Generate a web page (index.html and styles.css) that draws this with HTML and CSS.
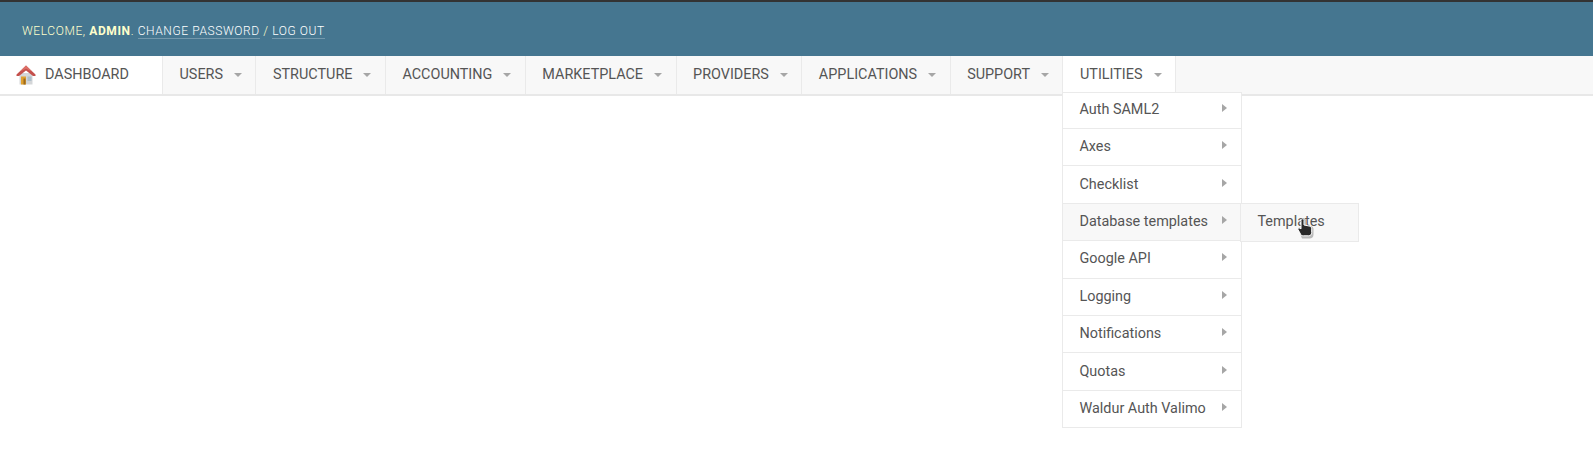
FILE: index.html
```html
<!DOCTYPE html>
<html lang="en">
<head>
<meta charset="utf-8">
<title>Utilities menu</title>
<link rel="stylesheet" href="styles.css">
</head>
<body>
<header class="top">
  <div class="tools">WELCOME, <strong>ADMIN</strong>. <a href="#">CHANGE PASSWORD</a> / <a href="#">LOG OUT</a></div>
</header>
<nav class="nav">
  <a class="dash" href="#">
    <svg class="home" width="20" height="20" viewBox="0 0 20 20">
      <path d="M3.500 8h13v11.500h-13z" fill="#d4d6d8"/>
      <path d="M5 11.500h5v8H5z" fill="#e0a02f"/>
      <path d="M7.500 13.500h2v6h-2z" fill="#9a6a20"/>
      <path d="M11.500 11.500h4v4.500h-4z" fill="#aebfca"/>
      <path d="M10 .5 19.500 9.500v1.500H17L10 5.500 3 11H.5V9.500z" fill="#c4504c"/>
      <path d="M10 .5 16 6.500 10 3.800 4 6.500z" fill="#dd7068"/>
    </svg>
    DASHBOARD
  </a>
  <div class="item"><span>USERS</span><i class="down"></i></div>
  <div class="item"><span>STRUCTURE</span><i class="down"></i></div>
  <div class="item"><span>ACCOUNTING</span><i class="down"></i></div>
  <div class="item"><span>MARKETPLACE</span><i class="down"></i></div>
  <div class="item"><span>PROVIDERS</span><i class="down"></i></div>
  <div class="item"><span>APPLICATIONS</span><i class="down"></i></div>
  <div class="item"><span>SUPPORT</span><i class="down"></i></div>
  <div class="item open"><span>UTILITIES</span><i class="down"></i>
    <ul class="menu">
      <li><span>Auth SAML2</span><i class="right"></i></li>
      <li><span>Axes</span><i class="right"></i></li>
      <li><span>Checklist</span><i class="right"></i></li>
      <li class="hover"><span>Database templates</span><i class="right"></i>
        <ul class="sub">
          <li><span>Templates</span>
            <svg class="cursor" width="17" height="21" viewBox="0 0 17 21">
              <path d="M5 20.500h7.500c2.500 0 4-1.500 4-4V11c0-1.500-1-2.500-2.500-2.800L9 7V2.500C9 1 8 .5 7 .5S5 1 5 2.500v8l-1.500-1C2 8.800 1 9.800 1.500 11.500z" fill="#000" opacity=".25"/>
              <path d="M4.300 17.500 1 11.500c-.5-1 .5-2.200 2-1.300l1 .7V2.300C4 1.300 4.700.8 5.500.8s1.500.5 1.500 1.500V7l5.200 1c1.600.4 2.500 1.300 2.500 2.800v3.700c0 2-1.200 3.300-3 3.300H6.500c-1 0-1.700-.2-2.200-.3z" fill="#2a2a2a" stroke="#fff" stroke-width="1"/>
            </svg>
          </li>
        </ul>
      </li>
      <li><span>Google API</span><i class="right"></i></li>
      <li><span>Logging</span><i class="right"></i></li>
      <li><span>Notifications</span><i class="right"></i></li>
      <li><span>Quotas</span><i class="right"></i></li>
      <li><span>Waldur Auth Valimo</span><i class="right"></i></li>
    </ul>
  </div>
</nav>
</body>
</html>
```

FILE: styles.css
```css
* { box-sizing: border-box; }
html, body { margin: 0; padding: 0; }
body {
  background: #fff;
  color: #666;
  font-family: Roboto, "Liberation Sans", sans-serif;
  font-size: 14.4px;
  height: 455px;
  overflow: hidden;
}
.top {
  height: 56px;
  background: #457690;
  border-top: 2px solid #333;
  display: flex;
  align-items: center;
  padding: 3px 0 0 22px;
}
.tools {
  color: #ffc;
  font-size: 12px;
  font-weight: 300;
  letter-spacing: .6px;
}
.tools strong { font-weight: 700; }
.tools a {
  color: #fff;
  text-decoration: none;
  border-bottom: 1px solid rgba(255, 255, 255, .25);
}
.nav {
  height: 40px;
  background: #f8f8f8;
  border-bottom: 2px solid #e8e8e8;
  display: flex;
  align-items: stretch;
}
.dash {
  width: 163px;
  background: #fff;
  display: flex;
  align-items: center;
  gap: 9px;
  padding: 0 0 1px 16px;
  color: #555;
  text-decoration: none;
  border-right: 1px solid #eaeaea;
}
.home { flex: none; }
.item {
  position: relative;
  display: flex;
  align-items: center;
  padding: 0 13.500px 1px 16.500px;
  color: #555;
  border-right: 1px solid #eaeaea;
}
.item.open { background: #fff; height: 38px; }
.down {
  margin-left: 11px;
  width: 0;
  height: 0;
  border-left: 4px solid transparent;
  border-right: 4px solid transparent;
  border-top: 4px solid #a6a6a6;
}
.menu, .sub {
  list-style: none;
  margin: 0;
  padding: 0;
  position: absolute;
  background: #fff;
  border: 1px solid #eaeaea;
}
.menu { top: 36px; left: -1px; width: 180px; }
.menu li {
  position: relative;
  height: 37.400px;
  display: flex;
  align-items: center;
  justify-content: space-between;
  padding: 0 14px 1px 16px;
  color: #555;
  border-bottom: 1px solid #eaeaea;
  white-space: nowrap;
}
.menu > li:first-child { height: 36px; padding-bottom: 2px; }
.menu > li:last-child { border-bottom: 0; height: 36px; }
.menu > li.hover { background: #f8f8f8; }
.right {
  width: 0;
  height: 0;
  border-top: 4px solid transparent;
  border-bottom: 4px solid transparent;
  border-left: 5px solid #a6a6a6;
  margin-top: -3px;
}
.sub { top: -1px; left: 177px; width: 119px; }
.menu .sub li { height: 37px; background: #f8f8f8; border-bottom: 0; padding: 0 13px 2px 16px; }
.cursor { position: absolute; left: 56px; top: 14px; }
```
